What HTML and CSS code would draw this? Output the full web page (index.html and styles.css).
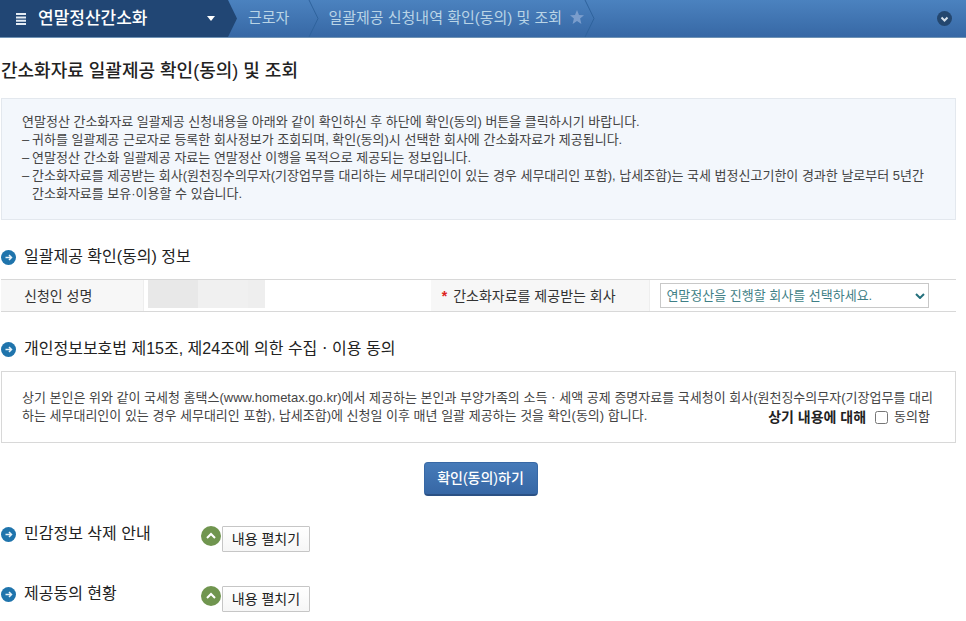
FILE: index.html
```html
<!DOCTYPE html>
<html lang="ko">
<head>
<meta charset="utf-8">
<meta name="viewport" content="width=device-width, initial-scale=1">
<title>간소화자료 일괄제공 확인(동의) 및 조회</title>
<link rel="stylesheet" href="styles.css">
</head>
<body>
<header class="topbar">
  <button class="menu" type="button">
    <svg class="bars" viewBox="0 0 10 12" aria-hidden="true"><path d="M0 1h10M0 4.400h10M0 7.800h10M0 11h10"/></svg>
    <span class="menu-name">연말정산간소화</span>
    <svg class="caret" viewBox="0 0 8 5" aria-hidden="true"><path d="M0 0h8L4 5z"/></svg>
  </button>
  <nav class="crumbs">
    <a class="crumb crumb-worker" href="#">근로자</a>
    <svg class="divider" viewBox="0 0 12 37" aria-hidden="true"><path d="M1 0l9 18.500L1 37"/></svg>
    <a class="crumb crumb-page" href="#">일괄제공 신청내역 확인(동의) 및 조회</a>
    <svg class="star" viewBox="0 0 14 14" aria-hidden="true"><path d="M7 0l2 5 5 .3-3.900 3.300L11.400 14 7 11l-4.400 3 1.300-5.400L0 5.300 5 5z"/></svg>
    <svg class="divider" viewBox="0 0 12 37" aria-hidden="true"><path d="M1 0l9 18.500L1 37"/></svg>
  </nav>
  <button class="more" type="button" aria-label="더보기">
    <svg viewBox="0 0 15 15" aria-hidden="true"><circle cx="7.500" cy="7.500" r="7.500"/><path d="M4.500 6.500l3 3 3-3"/></svg>
  </button>
</header>

<main class="page">
  <h1>간소화자료 일괄제공 확인(동의) 및 조회</h1>

  <section class="notice">
    <p>연말정산 간소화자료 일괄제공 신청내용을 아래와 같이 확인하신 후 하단에 확인(동의) 버튼을 클릭하시기 바랍니다.</p>
    <ul>
      <li>귀하를 일괄제공 근로자로 등록한 회사정보가 조회되며, 확인(동의)시 선택한 회사에 간소화자료가 제공됩니다.</li>
      <li>연말정산 간소화 일괄제공 자료는 연말정산 이행을 목적으로 제공되는 정보입니다.</li>
      <li>간소화자료를 제공받는 회사(원천징수의무자(기장업무를 대리하는 세무대리인이 있는 경우 세무대리인 포함), 납세조합)는 국세 법정신고기한이 경과한 날로부터 5년간<br>간소화자료를 보유·이용할 수 있습니다.</li>
    </ul>
  </section>

  <h2 class="heading">
    <svg class="bullet" viewBox="0 0 15 15" aria-hidden="true"><circle cx="7.500" cy="7.500" r="7.500"/><path d="M4.500 7.500h6M8 5l2.500 2.500L8 10"/></svg>
    일괄제공 확인(동의) 정보
  </h2>
  <table class="info">
    <tbody>
      <tr>
        <th class="label-name" scope="row">신청인 성명</th>
        <td class="value-name"><span class="mask"></span></td>
        <th class="label-company" scope="row"><span class="required">*</span><label for="company">간소화자료를 제공받는 회사</label></th>
        <td class="value-company">
          <span class="select-wrap">
            <select id="company"><option>연말정산을 진행할 회사를 선택하세요.</option></select>
            <svg viewBox="0 0 10 6" aria-hidden="true"><path d="M1 1l4 4 4-4"/></svg>
          </span>
        </td>
      </tr>
    </tbody>
  </table>

  <h2 class="heading">
    <svg class="bullet" viewBox="0 0 15 15" aria-hidden="true"><circle cx="7.500" cy="7.500" r="7.500"/><path d="M4.500 7.500h6M8 5l2.500 2.500L8 10"/></svg>
    개인정보보호법 제15조, 제24조에 의한 수집ㆍ이용 동의
  </h2>
  <section class="consent">
    <p>상기 본인은 위와 같이 국세청 홈택스(www.hometax.go.kr)에서 제공하는 본인과 부양가족의 소득ㆍ세액 공제 증명자료를 국세청이 회사(원천징수의무자(기장업무를 대리</p>
    <div class="consent-end">
      <p>하는 세무대리인이 있는 경우 세무대리인 포함), 납세조합)에 신청일 이후 매년 일괄 제공하는 것을 확인(동의) 합니다.</p>
      <div class="agree">
        <strong>상기 내용에 대해</strong>
        <input id="agree" type="checkbox">
        <label for="agree">동의함</label>
      </div>
    </div>
  </section>

  <div class="actions"><button class="confirm" type="button">확인(동의)하기</button></div>

  <section class="fold">
    <h2 class="heading">
      <svg class="bullet" viewBox="0 0 15 15" aria-hidden="true"><circle cx="7.500" cy="7.500" r="7.500"/><path d="M4.500 7.500h6M8 5l2.500 2.500L8 10"/></svg>
      민감정보 삭제 안내
    </h2>
    <svg class="up" viewBox="0 0 20 20" aria-hidden="true"><circle cx="10" cy="10" r="10"/><path d="M6 12l4-4 4 4"/></svg>
    <button class="expand" type="button">내용 펼치기</button>
  </section>
  <section class="fold">
    <h2 class="heading">
      <svg class="bullet" viewBox="0 0 15 15" aria-hidden="true"><circle cx="7.500" cy="7.500" r="7.500"/><path d="M4.500 7.500h6M8 5l2.500 2.500L8 10"/></svg>
      제공동의 현황
    </h2>
    <svg class="up" viewBox="0 0 20 20" aria-hidden="true"><circle cx="10" cy="10" r="10"/><path d="M6 12l4-4 4 4"/></svg>
    <button class="expand" type="button">내용 펼치기</button>
  </section>
</main>
</body>
</html>
```
FILE: styles.css
```css
* { box-sizing: border-box; }

body {
  margin: 0;
  background: #fff;
  color: #444;
  font: 13px/18px "Liberation Sans", "Noto Sans CJK KR", sans-serif;
}

h1, h2, p, ul { margin: 0; padding: 0; }
button, select, input { font: inherit; margin: 0; }
svg { display: block; flex: none; fill: none; }

/* Top bar */
.topbar {
  display: flex;
  align-items: center;
  height: 38px;
  background: linear-gradient(#4b82bf, #3768a5);
  border-bottom: 1px solid #6f93b5;
}
.menu {
  display: flex;
  align-items: center;
  width: 237px;
  height: 37px;
  padding: 0 22px 0 16px;
  border: 0;
  background: #214674;
  color: #fff;
  clip-path: polygon(0 0, 228px 0, 237px 50%, 228px 100%, 0 100%);
}
.bars { width: 10px; height: 12px; stroke: #e4ecf4; stroke-width: 2; }
.menu-name { margin-left: 12px; font-size: 17px; font-weight: 500; }
.caret { width: 8px; height: 5px; margin-left: auto; fill: #fff; }
.crumbs { display: flex; align-items: center; }
.crumb { padding-bottom: 2px; color: #b9d4e6; font-size: 15px; text-decoration: none; white-space: nowrap; }
.crumb-worker { margin: 0 19px 0 11px; }
.crumb-page { margin: 0 8px; }
.divider { width: 12px; height: 37px; stroke: #2f639d; stroke-width: 1; }
.star { width: 14px; height: 14px; margin-bottom: 3px; fill: #7a9dcc; }
.more { margin: 0 14px 0 auto; padding: 0; border: 0; background: none; }
.more svg { width: 15px; height: 15px; }
.more circle { fill: #24476f; }
.more path { stroke: #d5e0ea; stroke-width: 2; }

/* Page */
.page { margin: 0 10px 0 1px; }
h1 { padding: 21px 0 15px; color: #222; font-size: 18px; line-height: 24px; font-weight: 500; }

.notice { padding: 14px 20px 16px; border: 1px solid #e3e8ee; background: #f3f7fc; }
.notice ul { list-style: none; }
.notice li { position: relative; padding-left: 10px; }
.notice li::before { content: "–"; position: absolute; left: 0; }

.heading {
  display: flex;
  align-items: center;
  gap: 8px;
  color: #222;
  font-size: 16px;
  line-height: 20px;
  font-weight: 400;
}
.bullet { width: 15px; height: 15px; }
.bullet circle { fill: #1f74ac; }
.bullet path { stroke: #e8f3fa; stroke-width: 1.500; }
.notice + .heading { margin: 27px 0 12px; }
.info + .heading { margin: 27px 0 12px; }

/* Applicant table */
.info {
  width: 100%;
  border-collapse: separate;
  border-spacing: 0;
  border-top: 1px solid #d8d8d8;
  border-bottom: 1px solid #d8d8d8;
  table-layout: fixed;
}
.info th, .info td { height: 31px; padding: 0; text-align: left; font-weight: 400; }
.info th { background: #f7f7f7; color: #333; font-size: 14px; border-right: 1px solid #eee; }
.info .label-name { width: 15%; padding-left: 23px; }
.info .value-name { width: 30%; padding-left: 4px; vertical-align: top; }
.info .label-company { width: 23%; padding-left: 11px; }
.info .value-company { padding: 0 27px 0 10px; }
.mask {
  display: block;
  width: 117px;
  height: 28px;
  background: linear-gradient(90deg, #e8e8e8 50px, #f0f0f0 50px, #f0f0f0 100px, #eee 100px);
}
.required { margin-right: 6px; color: #d22; font-weight: 700; }
.select-wrap { display: block; position: relative; }
.select-wrap select {
  display: block;
  width: 100%;
  height: 25px;
  padding: 0 20px 0 5px;
  appearance: none;
  border: 1px solid #c8c8c8;
  border-radius: 0;
  background: #fff;
  color: #3f7f86;
}
.select-wrap svg { position: absolute; right: 4px; top: 10px; width: 10px; height: 6px; stroke: #24707c; stroke-width: 2; }

/* Consent */
.consent { padding: 17px 20px 16px; border: 1px solid #d8d8d8; white-space: nowrap; }
.consent-end { display: flex; justify-content: space-between; }
.agree { display: flex; align-items: center; padding: 1px 5px 0 0; }
.agree strong { color: #222; font-size: 14px; font-weight: 700; }
.agree input { width: 13px; height: 13px; margin: 0 6px 0 9px; }

.actions { display: flex; justify-content: center; margin: 19px 0 28px; padding-left: 4px; }
.confirm {
  width: 114px;
  height: 34px;
  padding: 0 0 2px;
  border: 1px solid #3768a5;
  border-bottom: 2px solid #2b5184;
  border-radius: 4px;
  background: linear-gradient(#467bb9, #3767a5);
  color: #fff;
  font-size: 14px;
  font-weight: 500;
}

/* Foldable sections */
.fold { display: flex; align-items: flex-start; height: 60px; }
.fold .heading { flex: 0 0 200px; }
.up { width: 20px; height: 20px; margin: 2px 1px 0 0; }
.up circle { fill: #70954f; }
.up path { stroke: #fff; stroke-width: 2; }
.expand {
  width: 88px;
  height: 26px;
  margin-top: 2px;
  padding: 0;
  border: 1px solid #c6c6c6;
  border-radius: 1px;
  background: linear-gradient(#fff, #f6f6f6);
  color: #222;
  font-size: 14px;
}
```
